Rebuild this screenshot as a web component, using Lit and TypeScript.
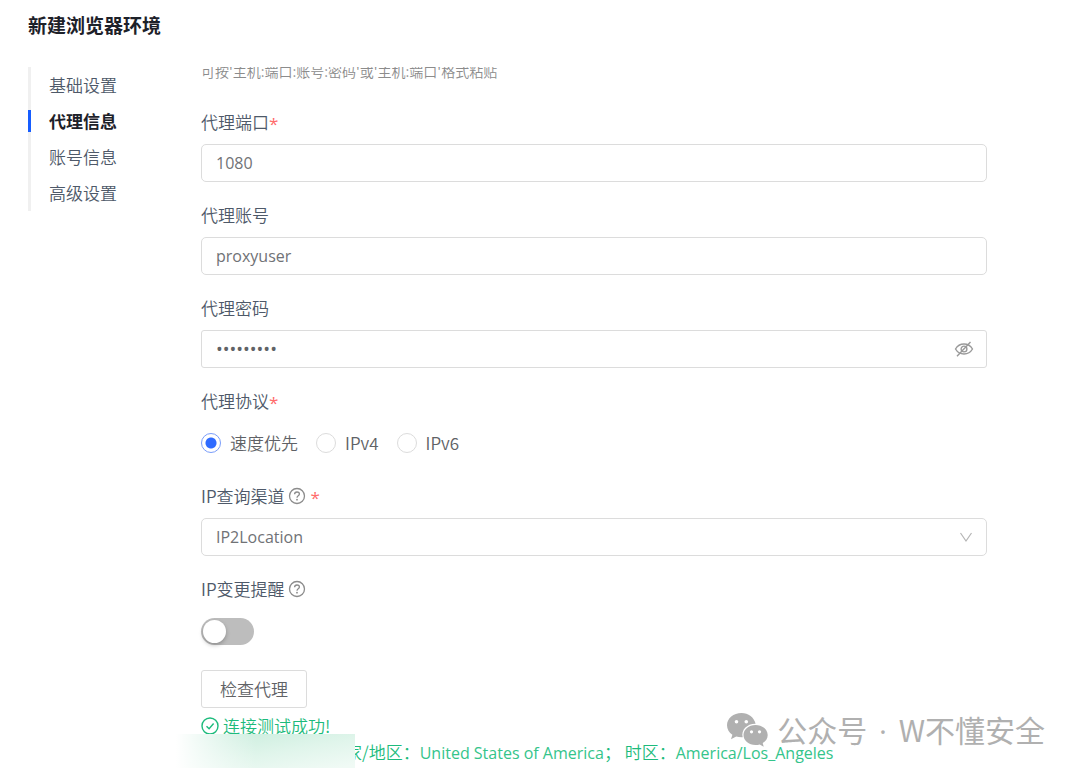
import { LitElement, html, css, svg } from "lit";
import { customElement, state } from "lit/decorators.js";

const helpIcon = svg`<svg class="help" viewBox="0 0 18 18" aria-hidden="true">
  <circle cx="9" cy="9" r="7.500" fill="none" stroke="currentColor" stroke-width="1.300"/>
  <path d="M6.600 7.300C6.600 5.800 7.700 5 9 5s2.400.8 2.400 2.100c0 1.700-2.400 1.800-2.400 3.600" fill="none" stroke="currentColor" stroke-width="1.300"/>
  <circle cx="9" cy="12.700" r=".9" fill="currentColor"/>
</svg>`;

@customElement("app-root")
export class AppRoot extends LitElement {
  @state() private section = 1;
  @state() private protocol = 0;

  private sections = ["基础设置", "代理信息", "账号信息", "高级设置"];
  private protocols = ["速度优先", "IPv4", "IPv6"];

  static styles = css`
    :host {
      display: block;
      position: relative;
      box-sizing: border-box;
      min-height: 100vh;
      overflow: hidden;
      background: #fff;
      color: #4e5969;
      font: 350 17px/24px "Noto Sans CJK SC", sans-serif;
    }
    * { box-sizing: border-box; }
    h1 {
      margin: 0;
      padding: 11px 28px 28px;
      font-size: 19px;
      line-height: 28px;
      font-weight: 700;
      color: #1d2129;
    }
    .body { display: flex; align-items: flex-start; padding: 0 93px 0 28px; }
    nav {
      display: flex;
      flex-direction: column;
      width: 173px;
      flex: none;
      box-shadow: inset 3px 0 #f0f0f0;
    }
    nav a {
      display: flex;
      align-items: center;
      height: 36px;
      color: inherit;
      text-decoration: none;
    }
    nav a::before { content: ""; width: 3px; height: 22px; margin-right: 18px; }
    nav a.active { font-weight: 700; color: #1d2129; }
    nav a.active::before { background: #165dff; }
    form { flex: 1; min-width: 0; }
    .clip { display: flex; align-items: flex-end; height: 15px; margin-bottom: 28px; overflow: hidden; }
    .hint { margin: 0; font-size: 14px; line-height: 22px; color: #8c8c8c; }
    .field { display: flex; flex-direction: column; gap: 10px; margin-bottom: 21px; }
    .label { display: flex; align-items: center; height: 24px; }
    .req { padding-top: 4px; font-family: "Open Sans", sans-serif; font-weight: 400; color: #ff6b6b; }
    .help { width: 18px; height: 18px; margin: 0 5px 0 3px; color: #8c8c8c; }
    .control { position: relative; display: flex; }
    .box {
      width: 100%;
      height: 38px;
      padding: 0 14px;
      border: 1px solid #dcdcdc;
      border-radius: 5px;
      background: #fff;
      color: #707276;
      font: 400 16px/24px "Open Sans", sans-serif;
      outline: none;
      appearance: none;
    }
    .box[type="password"] { font-size: 18px; border-radius: 3px; color: #606266; }
    .icon-btn {
      position: absolute;
      right: 13px;
      top: 10px;
      width: 20px;
      height: 18px;
      padding: 0;
      border: 0;
      background: none;
      color: #999;
    }
    .icon-btn svg { display: block; width: 20px; height: 18px; }
    .chevron { position: absolute; right: 14px; top: 13px; width: 14px; height: 12px; color: #b5b5b5; pointer-events: none; }
    .row { display: flex; align-items: center; gap: 18px; height: 40px; color: #606266; }
    .toggle { height: 38px; padding-top: 3px; }
    .radio { display: flex; align-items: center; gap: 9px; }
    .radio input {
      appearance: none;
      width: 20px;
      height: 20px;
      margin: 0;
      border: 1px solid #dcdcdc;
      border-radius: 50%;
    }
    .radio input:checked {
      border-color: #7a9dfa;
      background: radial-gradient(circle, #2f6bff 0 5px, #fff 6px);
    }
    .switch {
      appearance: none;
      display: flex;
      align-items: center;
      width: 53px;
      height: 27px;
      margin: 0;
      padding: 0 2px;
      border-radius: 14px;
      background: #bdbdbd;
    }
    .switch::before {
      content: "";
      width: 23px;
      height: 23px;
      border-radius: 50%;
      background: #fff;
      box-shadow: 0 2px 4px rgba(0, 0, 0, 0.25);
    }
    .switch:checked { background: #165dff; justify-content: flex-end; }
    .check {
      display: block;
      height: 38px;
      padding: 0 18px;
      border: 1px solid #dcdcdc;
      border-radius: 3px;
      background: #fff;
      color: #606266;
      font: inherit;
    }
    .result { position: relative; margin-top: 5px; line-height: 26px; color: #1dbb7c; white-space: nowrap; }
    .ok { display: flex; align-items: center; gap: 4px; }
    .ok svg { width: 18px; height: 18px; }
    .detail { padding-left: 144px; }
    .latin { font: 400 16px/26px "Open Sans", sans-serif; color: #35c48b; }
    .mask {
      position: absolute;
      left: -25px;
      top: 21px;
      width: 179px;
      height: 34px;
      background:
        linear-gradient(to right, #fff, rgba(255, 255, 255, 0) 45%),
        linear-gradient(170deg, #cdeedf 15%, #e0f5eb 55%, #f0faf5 95%);
    }
    .watermark {
      position: absolute;
      right: 35px;
      bottom: 22px;
      display: flex;
      align-items: center;
      gap: 9px;
      font-size: 30px;
      line-height: 44px;
      font-weight: 400;
      color: #b0b0b0;
      white-space: nowrap;
    }
    .watermark svg { width: 41px; height: 35px; }
    .dot { margin: 0 5px; font-family: "Open Sans", sans-serif; }
  `;

  render() {
    return html`
      <h1>新建浏览器环境</h1>
      <div class="body">
        <nav>
          ${this.sections.map((s, i) => html`<a href="#" class=${i === this.section ? "active" : ""}
            @click=${(e: Event) => { e.preventDefault(); this.section = i; }}>${s}</a>`)}
        </nav>
        <form @submit=${(e: Event) => e.preventDefault()}>
          <div class="clip"><p class="hint">可按'主机:端口:账号:密码'或'主机:端口'格式粘贴</p></div>
          <div class="field">
            <label class="label" for="port">代理端口<span class="req">*</span></label>
            <input class="box" id="port" value="1080">
          </div>
          <div class="field">
            <label class="label" for="user">代理账号</label>
            <input class="box" id="user" value="proxyuser">
          </div>
          <div class="field">
            <label class="label" for="pass">代理密码</label>
            <div class="control">
              <input class="box" id="pass" type="password" value="proxypass">
              <button class="icon-btn" type="button" aria-label="显示密码">
                <svg viewBox="0 0 20 18" fill="none" stroke="currentColor" stroke-width="1.400">
                  <path d="M1.500 9C3.500 5.600 6.400 4 10 4s6.500 1.600 8.500 5c-2 3.400-4.900 5-8.500 5S3.500 12.400 1.500 9z"/>
                  <circle cx="10" cy="9" r="2.900"/>
                  <path d="M3 16.200L16.500 2"/>
                </svg>
              </button>
            </div>
          </div>
          <div class="field" role="radiogroup" aria-label="代理协议">
            <div class="label">代理协议<span class="req">*</span></div>
            <div class="row">
              ${this.protocols.map((p, i) => html`<label class="radio"><input type="radio" name="protocol"
                .checked=${i === this.protocol} @change=${() => (this.protocol = i)}>${p}</label>`)}
            </div>
          </div>
          <div class="field">
            <label class="label" for="channel">IP查询渠道${helpIcon}<span class="req">*</span></label>
            <div class="control">
              <select class="box" id="channel"><option>IP2Location</option></select>
              <svg class="chevron" viewBox="0 0 14 12" fill="none" stroke="currentColor" stroke-width="1.200"><path d="M1.500 2L7 10l5.500-8"/></svg>
            </div>
          </div>
          <div class="field">
            <label class="label" for="notify">IP变更提醒${helpIcon}</label>
            <div class="row toggle"><input class="switch" id="notify" type="checkbox" role="switch"></div>
          </div>
          <button class="check" type="button">检查代理</button>
          <div class="result">
            <div class="ok">
              <svg viewBox="0 0 18 18" fill="none" stroke="currentColor" stroke-width="1.400"><circle cx="9" cy="9" r="8"/><path d="M5.500 9.200l2.600 2.600L12.600 6.500"/></svg>
              连接测试成功!
            </div>
            <div class="detail">家/地区：<span class="latin">United States of America</span>； 时区：<span class="latin">America/Los_Angeles</span></div>
            <div class="mask"></div>
          </div>
        </form>
      </div>
      <div class="watermark">
        <svg viewBox="0 0 41 35" fill="#b0b0b0">
          <path d="M14.500 0C6.500 0 0 5.400 0 12.200c0 3.900 2.100 7.300 5.400 9.600L4 26.200l5.200-2.700c1.700.5 3.500.8 5.300.8h1.200C13.800 17 20 10.600 28.600 10.700 27.200 4.500 21.400 0 14.500 0z"/>
          <path d="M28.500 12C21.700 12 16.500 16.500 16.500 22s5.200 10 12 10c1.500 0 2.900-.2 4.200-.6l4 2.400-1-3.700c3.100-1.800 5-4.700 5-8.100C40.700 16.500 35.300 12 28.500 12z"/>
          <g fill="#fff"><circle cx="9.500" cy="8.700" r="1.800"/><circle cx="19.300" cy="8.700" r="1.800"/><circle cx="24.500" cy="18.800" r="1.600"/><circle cx="32.500" cy="18.800" r="1.600"/></g>
        </svg>
        <span>公众号 <span class="dot">·</span> W不懂安全</span>
      </div>
    `;
  }
}
